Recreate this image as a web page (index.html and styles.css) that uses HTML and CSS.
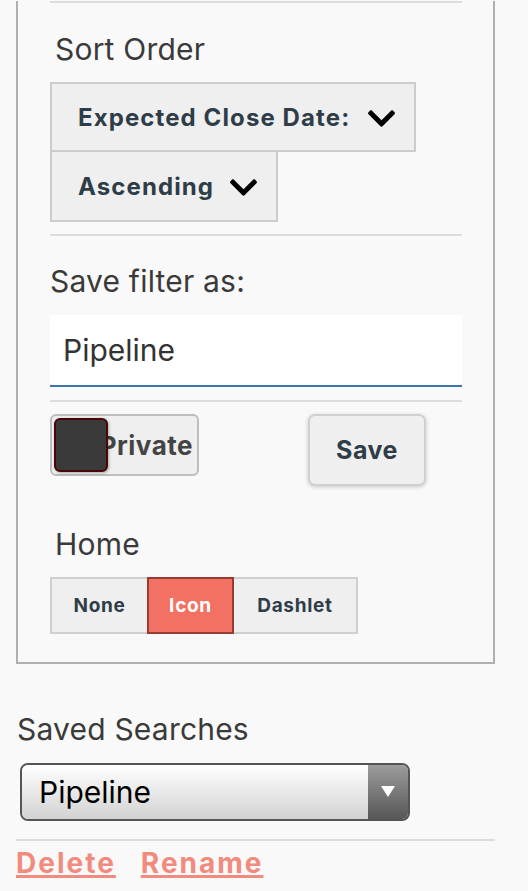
FILE: index.html
```html
<!DOCTYPE html>
<html>
<head>
<meta charset="utf-8">
<link rel="stylesheet" href="styles.css">
</head>
<body>
<div class="panel">
  <div class="rule rule-top"></div>
  <div class="label indent label-sort">Sort Order</div>
  <div class="sort-buttons">
    <div class="sort-btn sort-btn-1">
      <span>Expected Close Date:</span>
      <svg class="chev" viewBox="5 123 438 265"><path d="M207.029 381.476L12.686 187.132c-9.373-9.373-9.373-24.569 0-33.941l22.667-22.667c9.357-9.357 24.522-9.375 33.901-.04L224 284.505l154.745-154.021c9.379-9.335 24.544-9.317 33.901.04l22.667 22.667c9.373 9.373 9.373 24.569 0 33.941L240.971 381.476c-9.373 9.372-24.569 9.372-33.942 0z"/></svg>
    </div>
    <div class="sort-btn sort-btn-2">
      <span>Ascending</span>
      <svg class="chev" viewBox="5 123 438 265"><path d="M207.029 381.476L12.686 187.132c-9.373-9.373-9.373-24.569 0-33.941l22.667-22.667c9.357-9.357 24.522-9.375 33.901-.04L224 284.505l154.745-154.021c9.379-9.335 24.544-9.317 33.901.04l22.667 22.667c9.373 9.373 9.373 24.569 0 33.941L240.971 381.476c-9.373 9.372-24.569 9.372-33.942 0z"/></svg>
    </div>
  </div>
  <div class="rule rule-2"></div>
  <div class="label label-save">Save filter as:</div>
  <div class="text-input">Pipeline</div>
  <div class="rule rule-3"></div>
  <div class="toggle-row">
    <div class="toggle">
      <span class="toggle-text">Private</span>
      <span class="knob"></span>
    </div>
    <div class="save-btn">Save</div>
  </div>
  <div class="label indent label-home">Home</div>
  <div class="seg">
    <div class="seg-btn seg-none">None</div>
    <div class="seg-btn seg-icon active">Icon</div>
    <div class="seg-btn seg-dash">Dashlet</div>
  </div>
</div>
<div class="saved">
  <div class="label saved-label">Saved Searches</div>
  <div class="select">
    <div class="select-text">Pipeline</div>
    <div class="select-arrow"><span class="tri"></span></div>
  </div>
  <div class="rule rule-saved"></div>
  <div class="links">
    <a class="link" href="#">Delete</a>
    <a class="link" href="#">Rename</a>
  </div>
</div>
</body>
</html>
```
FILE: styles.css
```css
html, body {
  margin: 0;
  padding: 0;
  background: #f9f9f9;
  font-family: Inter, "Noto Sans", sans-serif;
}

.panel {
  margin-left: 16px;
  border: 2px solid #b0b0b0;
  border-top: none;
  padding: 0 31px 28px 32px;
  box-sizing: border-box;
  width: 479px;
}

.rule {
  height: 2px;
  background: #dcdcdc;
}
.rule-top { margin-top: 1px; }
.rule-2 { margin-top: 12px; }
.rule-3 { margin-top: 13px; }

.label {
  font-size: 30px;
  line-height: 36px;
  color: #3a3a3a;
  letter-spacing: 0.2px;
}
.indent { padding-left: 5px; }
.label-sort { margin-top: 28px; }
.label-save { margin-top: 27px; }
.label-home { margin-top: 40px; }

.sort-buttons {
  margin-top: 15px;
  display: flex;
  flex-direction: column;
  align-items: flex-start;
}
.sort-btn {
  box-sizing: border-box;
  height: 70px;
  display: flex;
  align-items: center;
  justify-content: space-between;
  padding: 0 19px 0 26px;
  background: #efefef;
  border: 2px solid #cccccc;
  font-size: 24px;
  font-weight: 700;
  letter-spacing: 1.1px;
  color: #2e3d48;
}
.sort-btn-1 { width: 366px; }
.sort-btn-2 { width: 228px; border-top: none; }
.chev {
  width: 27px;
  height: 17px;
  fill: #000;
  margin-top: 3px;
}

.text-input {
  margin-top: 16px;
  height: 70px;
  background: #fff;
  border-bottom: 2px solid #3e74a8;
  padding-left: 13px;
  font-size: 30px;
  line-height: 70px;
  color: #333;
}

.toggle-row {
  margin-top: 12px;
  display: flex;
  align-items: flex-start;
}
.toggle {
  position: relative;
  box-sizing: border-box;
  width: 149px;
  height: 62px;
  border: 2px solid #bdbdbd;
  border-radius: 6px;
  background: #efefef;
  display: flex;
  align-items: center;
  justify-content: flex-end;
  padding-right: 4px;
}
.toggle-text {
  font-size: 26px;
  font-weight: 700;
  color: #444;
  letter-spacing: 0.5px;
}
.knob {
  position: absolute;
  left: 2px;
  top: 2px;
  width: 54px;
  height: 54px;
  box-sizing: border-box;
  background: #3a3a3a;
  border: 2px solid #4a0606;
  border-radius: 6px;
  box-shadow: 1px 1px 3px rgba(0,0,0,0.3);
}
.save-btn {
  margin-left: 109px;
  box-sizing: border-box;
  width: 118px;
  height: 72px;
  border: 2px solid #d0d0d0;
  border-radius: 7px;
  background: #efefef;
  box-shadow: 0 1px 4px rgba(0,0,0,0.2);
  display: flex;
  align-items: center;
  justify-content: center;
  font-size: 25px;
  font-weight: 700;
  color: #2e3d48;
  letter-spacing: 0.5px;
}

.seg {
  margin-top: 15px;
  display: flex;
}
.seg-btn {
  box-sizing: border-box;
  height: 57px;
  border: 2px solid #cfcfcf;
  background: #efefef;
  display: flex;
  align-items: center;
  justify-content: center;
  font-size: 19px;
  font-weight: 700;
  color: #2e3d48;
  letter-spacing: 0.7px;
}
.seg-none { width: 97px; border-right: none; }
.seg-icon { width: 87px; }
.seg-dash { width: 124px; border-left: none; }
.seg-btn.active {
  background: #f27163;
  border-color: #9a3b31;
  color: #fff;
}

.saved {
  padding-left: 16px;
  width: 479px;
}
.saved-label {
  margin-top: 47px;
  padding-left: 1px;
}
.select {
  margin-top: 16px;
  margin-left: 4px;
  box-sizing: border-box;
  width: 390px;
  height: 58px;
  border: 2px solid #555;
  border-radius: 8px;
  overflow: hidden;
  display: flex;
}
.select-text {
  flex: 1;
  background: linear-gradient(#ffffff, #d2d2d2);
  font-size: 30px;
  line-height: 54px;
  padding-left: 17px;
  color: #000;
}
.select-arrow {
  width: 40px;
  background: linear-gradient(#9c9c9c, #575757);
  display: flex;
  align-items: center;
  justify-content: center;
}
.tri {
  width: 0;
  height: 0;
  border-left: 7px solid transparent;
  border-right: 7px solid transparent;
  border-top: 11px solid #fff;
  margin-top: -2px;
}
.rule-saved {
  margin-top: 18px;
}
.links {
  display: flex;
  gap: 25px;
  margin-top: 5px;
}
.link {
  font-size: 28px;
  font-weight: 700;
  line-height: 34px;
  letter-spacing: 2px;
  color: #f28b7e;
  text-decoration: underline;
  text-decoration-thickness: 3px;
  text-underline-offset: 2px;
}
```
